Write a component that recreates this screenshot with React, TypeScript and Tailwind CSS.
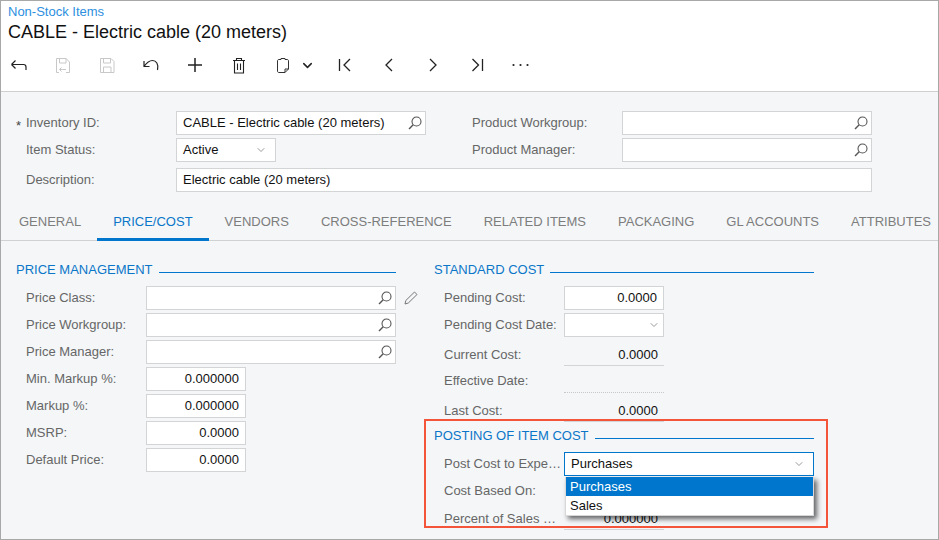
import React from 'react';
import { ChevronDown } from 'lucide-react';

function Ico({ w, children }: { w: number; children: React.ReactNode }) {
  return (
    <div className="shrink-0" style={{ width: w }}>
      <svg width="18" height="18" viewBox="0 0 18 18" fill="none" className="block">{children}</svg>
    </div>
  );
}

function Toolbar() {
  return (
    <div className="flex h-[18px] items-center pl-[1px] mt-[12px]">
      <Ico w={44}>
        <path d="M2.5 8.5h12c1.500 0 2.500 1 2.500 2.500v3M2.500 8.500l4-4M2.500 8.500l4 4" stroke="#222" strokeWidth="1.200" />
      </Ico>
      <Ico w={45}>
        <g stroke="#c8c8c8">
          <path d="M6 16.500H3.500V2.500h9.500L16.500 6v10.500H13" />
          <path d="M6.500 2.500V7H13V2.500M6.500 13.500H13M6.500 13.500l2-2M6.500 13.500l2 2" />
        </g>
      </Ico>
      <Ico w={44}>
        <g stroke="#c8c8c8">
          <path d="M2.500 2.500h10.500l3 3v11H2.500zM5.500 2.500V7H12.500V2.500M5.500 16.500V11h7.500v5.500" />
        </g>
      </Ico>
      <Ico w={44}>
        <path d="M2 5v5.500h5.500M2 10.500C4.500 7 7.500 4.500 10.500 4.500c3.500 0 6.500 3.500 5 9.500" stroke="#222" strokeWidth="1.200" />
      </Ico>
      <Ico w={44}>
        <path d="M9 2v14M2 9h14" stroke="#222" strokeWidth="1.500" />
      </Ico>
      <Ico w={44}>
        <path d="M3 4.500h12M6.500 4.500V2.500h5v2M4.500 4.500V17h9V4.500M7.500 7.500V14M10.500 7.500V14" stroke="#222" strokeWidth="1.100" />
      </Ico>
      <Ico w={24}>
        <path d="M5 3.500C4 3.500 3.500 4 3.500 5v10c0 1 .5 1.500 1.500 1.500h6l3.500-3.500V5c0-1-.5-1.500-1.500-1.500h-2v-1H7v1zM14.500 13H11v3.500" stroke="#333" />
      </Ico>
      <div className="w-[18px] shrink-0 flex justify-center">
        <ChevronDown size={15} strokeWidth={2.400} className="text-[#222]" />
      </div>
      <div className="w-[20px] shrink-0" />
      <Ico w={44}>
        <path d="M3.500 3v12M14 3L8 9l6 6" stroke="#222" strokeWidth="1.300" />
      </Ico>
      <Ico w={44}>
        <path d="M12 3L6 9l6 6" stroke="#222" strokeWidth="1.300" />
      </Ico>
      <Ico w={44}>
        <path d="M6 3l6 6-6 6" stroke="#222" strokeWidth="1.300" />
      </Ico>
      <Ico w={44}>
        <path d="M14.500 3v12M4.500 3l6 6-6 6" stroke="#222" strokeWidth="1.300" />
      </Ico>
      <Ico w={44}>
        <g fill="#222">
          <circle cx="1.500" cy="9" r="1.100" />
          <circle cx="8.500" cy="9" r="1.100" />
          <circle cx="15.500" cy="9" r="1.100" />
        </g>
      </Ico>
    </div>
  );
}

function Search() {
  return (
    <svg width="16" height="16" viewBox="0 0 16 16" fill="none" stroke="#555" className="shrink-0 -mr-[4px]">
      <circle cx="9.500" cy="6.500" r="4.500" strokeWidth="1.100" />
      <path d="M6.200 9.800L2 14" strokeWidth="1.400" />
    </svg>
  );
}

function Chevron() {
  return <ChevronDown size={12} strokeWidth={1.500} className="text-[#777] shrink-0" />;
}

function Label({ children, w }: { children: React.ReactNode; w: string }) {
  return <div className={`${w} shrink-0 whitespace-nowrap text-[13px] text-[#666]`}>{children}</div>;
}

function Box({ w, children, right }: { w: string; children?: React.ReactNode; right?: boolean }) {
  return (
    <div className={`${w} h-[24px] shrink-0 flex items-center border border-[#d2d4d6] bg-white px-[6px] text-[13px] text-[#111] ${right ? 'justify-end' : 'justify-between'}`}>
      {children}
    </div>
  );
}

function Lookup({ w, value }: { w: string; value?: string }) {
  return (
    <Box w={w}>
      <span>{value}</span>
      <Search />
    </Box>
  );
}

function Num({ value }: { value: string }) {
  return <Box w="w-[100px]" right>{value}</Box>;
}

function Heading({ title, className }: { title: string; className: string }) {
  return (
    <div className={`w-[380px] flex items-center gap-[6px] h-[18px] ${className}`}>
      <span className="text-[13px] text-[#0b76c8] whitespace-nowrap">{title}</span>
      <div className="flex-1 h-px bg-[#0077cc] mt-[4px]" />
    </div>
  );
}

function Row({ label, labelW, mb, children }: { label: string; labelW: string; mb?: string; children?: React.ReactNode }) {
  return (
    <div className={`flex items-center h-[24px] ${mb ?? 'mb-[3px]'}`}>
      <Label w={labelW}>{label}</Label>
      {children}
    </div>
  );
}

function Readonly({ value, dotted }: { value?: string; dotted?: boolean }) {
  return (
    <div className={`w-[100px] h-[24px] pt-[2px] flex items-center justify-end pr-[6px] text-[13px] text-[#111] border-b ${dotted ? 'border-dotted border-[#c8c8c8]' : 'border-[#d2d4d6]'}`}>
      {value}
    </div>
  );
}

const tabs = ['GENERAL', 'PRICE/COST', 'VENDORS', 'CROSS-REFERENCE', 'RELATED ITEMS', 'PACKAGING', 'GL ACCOUNTS', 'ATTRIBUTES'];

export default function App() {
  return (
    <div className="relative w-[939px] h-[540px] overflow-hidden bg-[#f4f6f8] border border-[#a8a8a8] font-['Liberation_Sans',Arial,sans-serif]">
      <div className="h-[91px] bg-white border-b border-[#cfcfcf] pl-[7px]">
        <div className="text-[13px] leading-[14px] pt-[4px] h-[18px] text-[#2e8fe0]">Non-Stock Items</div>
        <div className="text-[18px] leading-[24px] mt-[1px] text-[#111]">CABLE - Electric cable (20 meters)</div>
        <Toolbar />
      </div>

      <div className="pt-[19px] pl-[25px] w-[871px]">
        <div className="flex">
          <div className="relative">
            <Row label="Inventory ID:" labelW="w-[150px]"><Lookup w="w-[250px]" value="CABLE - Electric cable (20 meters)" /></Row>
            <span className="absolute -left-[10px] top-[5px] text-[13px] text-[#444]">*</span>
            <Row label="Item Status:" labelW="w-[150px]">
              <Box w="w-[100px]"><span>Active</span><span className="mr-[2px]"><Chevron /></span></Box>
            </Row>
          </div>
          <div className="ml-[46px]">
            <Row label="Product Workgroup:" labelW="w-[150px]"><Lookup w="w-[250px]" /></Row>
            <Row label="Product Manager:" labelW="w-[150px]"><Lookup w="w-[250px]" /></Row>
          </div>
        </div>
        <div className="flex items-center h-[24px] mt-[3px]">
          <Label w="w-[150px]">Description:</Label>
          <Box w="w-[696px]"><span>Electric cable (20 meters)</span></Box>
        </div>
      </div>

      <div className="flex h-[39px] mt-[10px] pl-[2px] border-b border-[#cfd1d3] text-[13px] text-[#7d7d7d]">
        {tabs.map((t) => (
          <div key={t} className={`px-[16px] pt-[10px] h-[39px] whitespace-nowrap ${t === 'PRICE/COST' ? 'text-[#0b76c8] border-b-[3px] border-[#0077cc] pt-[9px]' : ''}`}>{t}</div>
        ))}
      </div>

      <div className="flex pl-[15px] pt-[20px]">
        <div className="w-[418px]">
          <Heading title="PRICE MANAGEMENT" className="mb-[7px]" />
          <div className="pl-[10px]">
            <div className="relative">
              <Row label="Price Class:" labelW="w-[120px]"><Lookup w="w-[250px]" /></Row>
              <svg width="16" height="16" viewBox="0 0 16 16" fill="none" stroke="#777" className="absolute left-[377px] top-[4px]">
                <path d="M2 14l.8-3.500L11.500 2l2.500 2.500L5.300 13z" />
              </svg>
            </div>
            <Row label="Price Workgroup:" labelW="w-[120px]"><Lookup w="w-[250px]" /></Row>
            <Row label="Price Manager:" labelW="w-[120px]"><Lookup w="w-[250px]" /></Row>
            <Row label="Min. Markup %:" labelW="w-[120px]"><Num value="0.000000" /></Row>
            <Row label="Markup %:" labelW="w-[120px]"><Num value="0.000000" /></Row>
            <Row label="MSRP:" labelW="w-[120px]"><Num value="0.0000" /></Row>
            <Row label="Default Price:" labelW="w-[120px]"><Num value="0.0000" /></Row>
          </div>
        </div>
        <div className="w-[380px]">
          <Heading title="STANDARD COST" className="mb-[7px]" />
          <div className="pl-[10px]">
            <Row label="Pending Cost:" labelW="w-[120px]"><Num value="0.0000" /></Row>
            <Row label="Pending Cost Date:" labelW="w-[120px]" mb="mb-[5px]">
              <Box w="w-[100px]"><span /><span className="-mr-[3px]"><Chevron /></span></Box>
            </Row>
            <Row label="Current Cost:" labelW="w-[120px] pt-[2px]"><Readonly value="0.0000" /></Row>
            <Row label="Effective Date:" labelW="w-[120px]" mb="mb-[5px]"><Readonly dotted /></Row>
            <Row label="Last Cost:" labelW="w-[120px] pt-[2px]"><Readonly value="0.0000" /></Row>
          </div>
          <Heading title="POSTING OF ITEM COST" className="mb-[7px] mt-[5px]" />
          <div className="pl-[10px]">
            <Row label="Post Cost to Expe…" labelW="w-[120px]">
              <div className="w-[250px] h-[24px] shrink-0 flex items-center justify-between border border-[#0077cc] bg-white px-[6px] text-[13px] text-[#111]">
                <span>Purchases</span><span className="mr-[2px]"><Chevron /></span>
              </div>
            </Row>
            <Row label="Cost Based On:" labelW="w-[120px]" />
            <Row label="Percent of Sales …" labelW="w-[120px] pt-[2px]"><Readonly value="0.000000" /></Row>
          </div>
        </div>
      </div>

      {/* red callout around the posting section */}
      <div className="absolute left-[423px] top-[418px] w-[404px] h-[109px] border-2 border-[#f4553a]" />

      {/* open dropdown */}
      <div className="absolute left-[564px] top-[476px] w-[249px] h-[39px] bg-white border-x border-b border-[#d8d8d8] shadow-[3px_3px_5px_rgba(0,0,0,0.6)] text-[13px]">
        <div className="h-[19px] bg-[#0077cc] text-white pl-[4px] leading-[19px]">Purchases</div>
        <div className="h-[19px] text-[#111] pl-[4px] leading-[19px]">Sales</div>
      </div>
    </div>
  );
}
